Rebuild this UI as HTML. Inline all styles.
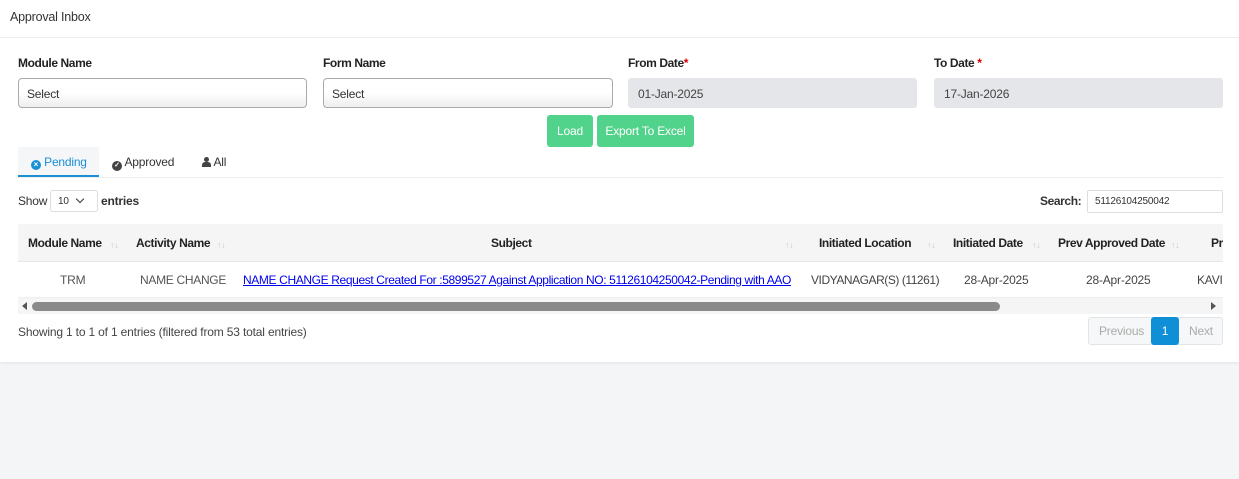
<!DOCTYPE html>
<html><head><style>
*{box-sizing:border-box;margin:0;padding:0}
body{width:1239px;height:479px;background:#f4f5f7;font-family:"Liberation Sans",sans-serif;font-size:12px;color:#333;position:relative;overflow:hidden;letter-spacing:-0.2px}
.card{position:absolute;left:0;top:0;width:1239px;height:362px;background:#fff;box-shadow:0 1px 3px rgba(0,0,0,.08)}
.a{position:absolute;white-space:nowrap}
.lbl{font-weight:bold;color:#222;font-size:12px;letter-spacing:-0.4px}
.sel{position:absolute;top:78px;height:30px;border:1px solid #aaa;border-radius:4px;background:linear-gradient(#fff 50%,#eee);padding:8px 8px;font-size:12px;color:#333}
.dt{position:absolute;top:78px;height:30px;width:289px;background:#e4e6e9;border-radius:3px;padding:9px 10px;color:#444}
.btn{position:absolute;top:115px;height:32px;background:#52d38b;color:#fff;border-radius:3px;padding:9px 0;text-align:center}
.sa{color:#ccc;font-size:9px;font-weight:normal;position:absolute}
.ic{display:inline-block;width:10px;height:10px;border-radius:50%;color:#fff;font-size:8px;line-height:10px;text-align:center;font-weight:bold;vertical-align:-1px;letter-spacing:0}
</style></head><body>
<div class="card">
<div class="a" style="left:10px;top:10px;font-size:12.5px;color:#333">Approval Inbox</div>
<div class="a" style="left:0;top:37px;width:1239px;height:1px;background:#eee"></div>
<div class="a lbl" style="left:18px;top:56px">Module Name</div>
<div class="a lbl" style="left:323px;top:56px">Form Name</div>
<div class="a lbl" style="left:628px;top:56px">From Date<span style="color:#d00">*</span></div>
<div class="a lbl" style="left:934px;top:56px">To Date <span style="color:#d00">*</span></div>
<div class="sel" style="left:18px;width:289px">Select</div>
<div class="sel" style="left:323px;width:290px">Select</div>
<div class="dt" style="left:628px">01-Jan-2025</div>
<div class="dt" style="left:934px">17-Jan-2026</div>
<div class="btn" style="left:547px;width:46px">Load</div>
<div class="btn" style="left:597px;width:97px">Export To Excel</div>
<div class="a" style="left:18px;top:147px;width:81px;height:30px;background:#f4f6f8;border-bottom:2px solid #1a8fd6"></div>
<div class="a" style="left:18px;top:177px;width:1205px;height:1px;background:#eee"></div>
<div class="a" style="left:31px;top:155px;color:#1a8fd6"><span class="ic" style="background:#1a8fd6">×</span> Pending</div>
<div class="a" style="left:112px;top:155px;color:#333"><span class="ic" style="background:#444;font-size:7px">✓</span> Approved</div>
<div class="a" style="left:202px;top:155px;color:#333"><span style="display:inline-block;width:9px;height:10px;position:relative;vertical-align:-1px"><span style="position:absolute;left:2px;top:0;width:5px;height:5px;border-radius:50%;background:#444"></span><span style="position:absolute;left:0;top:5px;width:9px;height:5px;border-radius:3px 3px 0 0;background:#444"></span></span> All</div>
<div class="a" style="left:18px;top:194px">Show</div>
<div class="a" style="left:50px;top:190px;width:48px;height:22px;border:1px solid #ddd;border-radius:3px;font-size:10px;padding:5px 7px">10 <span style="margin-left:6px;display:inline-block;width:6px;height:6px;border-right:1.3px solid #333;border-bottom:1.3px solid #333;transform:rotate(45deg);vertical-align:2px"></span></div>
<div class="a" style="left:101px;top:194px;font-weight:bold">entries</div>
<div class="a" style="left:1040px;top:194px;font-weight:bold;letter-spacing:-0.4px">Search:</div>
<div class="a" style="left:1087px;top:190px;width:136px;height:23px;border:1px solid #ddd;border-radius:2px;font-size:10px;padding:5px 7px">51126104250042</div>
<div class="a" style="left:18px;top:224px;width:1205px;height:38px;background:#f5f5f5;border-bottom:1px solid #e6e6e6"></div>
<div class="a" style="left:18px;top:297px;width:1205px;height:1px;background:#eee"></div>
<div class="a lbl" style="left:28px;top:236px">Module Name</div><span class="sa" style="left:110px;top:240px">↑↓</span>
<div class="a lbl" style="left:136px;top:236px">Activity Name</div><span class="sa" style="left:217px;top:240px">↑↓</span>
<div class="a lbl" style="left:491px;top:236px">Subject</div><span class="sa" style="left:785px;top:240px">↑↓</span>
<div class="a lbl" style="left:819px;top:236px">Initiated Location</div><span class="sa" style="left:927px;top:240px">↑↓</span>
<div class="a lbl" style="left:953px;top:236px">Initiated Date</div><span class="sa" style="left:1032px;top:240px">↑↓</span>
<div class="a lbl" style="left:1058px;top:236px">Prev Approved Date</div><span class="sa" style="left:1171px;top:240px">↑↓</span>
<div class="a lbl" style="left:1211px;top:236px;width:12px;overflow:hidden">Prev</div>
<div class="a" style="left:60px;top:273px;color:#555">TRM</div>
<div class="a" style="left:140px;top:273px;color:#555;letter-spacing:-0.3px">NAME CHANGE</div>
<div class="a" style="left:243px;top:273px;color:#00e;text-decoration:underline;letter-spacing:-0.37px">NAME CHANGE Request Created For :5899527 Against Application NO: 51126104250042-Pending with AAO</div>
<div class="a" style="left:811px;top:273px;color:#444;letter-spacing:-0.45px">VIDYANAGAR(S) (11261)</div>
<div class="a" style="left:964px;top:273px;color:#444">28-Apr-2025</div>
<div class="a" style="left:1086px;top:273px;color:#444">28-Apr-2025</div>
<div class="a" style="left:1197px;top:273px;color:#444;width:26px;overflow:hidden">KAVITHA</div>
<div class="a" style="left:18px;top:298px;width:1205px;height:16px;background:#f5f5f5"></div>
<div class="a" style="left:22px;top:302px;width:0;height:0;border-top:4px solid transparent;border-bottom:4px solid transparent;border-right:5px solid #555"></div>
<div class="a" style="left:1211px;top:302px;width:0;height:0;border-top:4px solid transparent;border-bottom:4px solid transparent;border-left:5px solid #555"></div>
<div class="a" style="left:32px;top:302px;width:968px;height:9px;border-radius:5px;background:#8a8a8a"></div>
<div class="a" style="left:18px;top:325px;color:#444;letter-spacing:-0.17px">Showing 1 to 1 of 1 entries (filtered from 53 total entries)</div>
<div class="a" style="left:1088px;top:317px;width:135px;height:28px;border:1px solid #e2e5e8;border-radius:3px;background:#f6f7f8"></div>
<div class="a" style="left:1099px;top:324px;color:#aaa">Previous</div>
<div class="a" style="left:1151px;top:317px;width:28px;height:28px;background:#0f8fd6;border-radius:3px;color:#fff;text-align:center;padding-top:7px">1</div>
<div class="a" style="left:1189px;top:324px;color:#aaa">Next</div>
</div>
</body></html>
